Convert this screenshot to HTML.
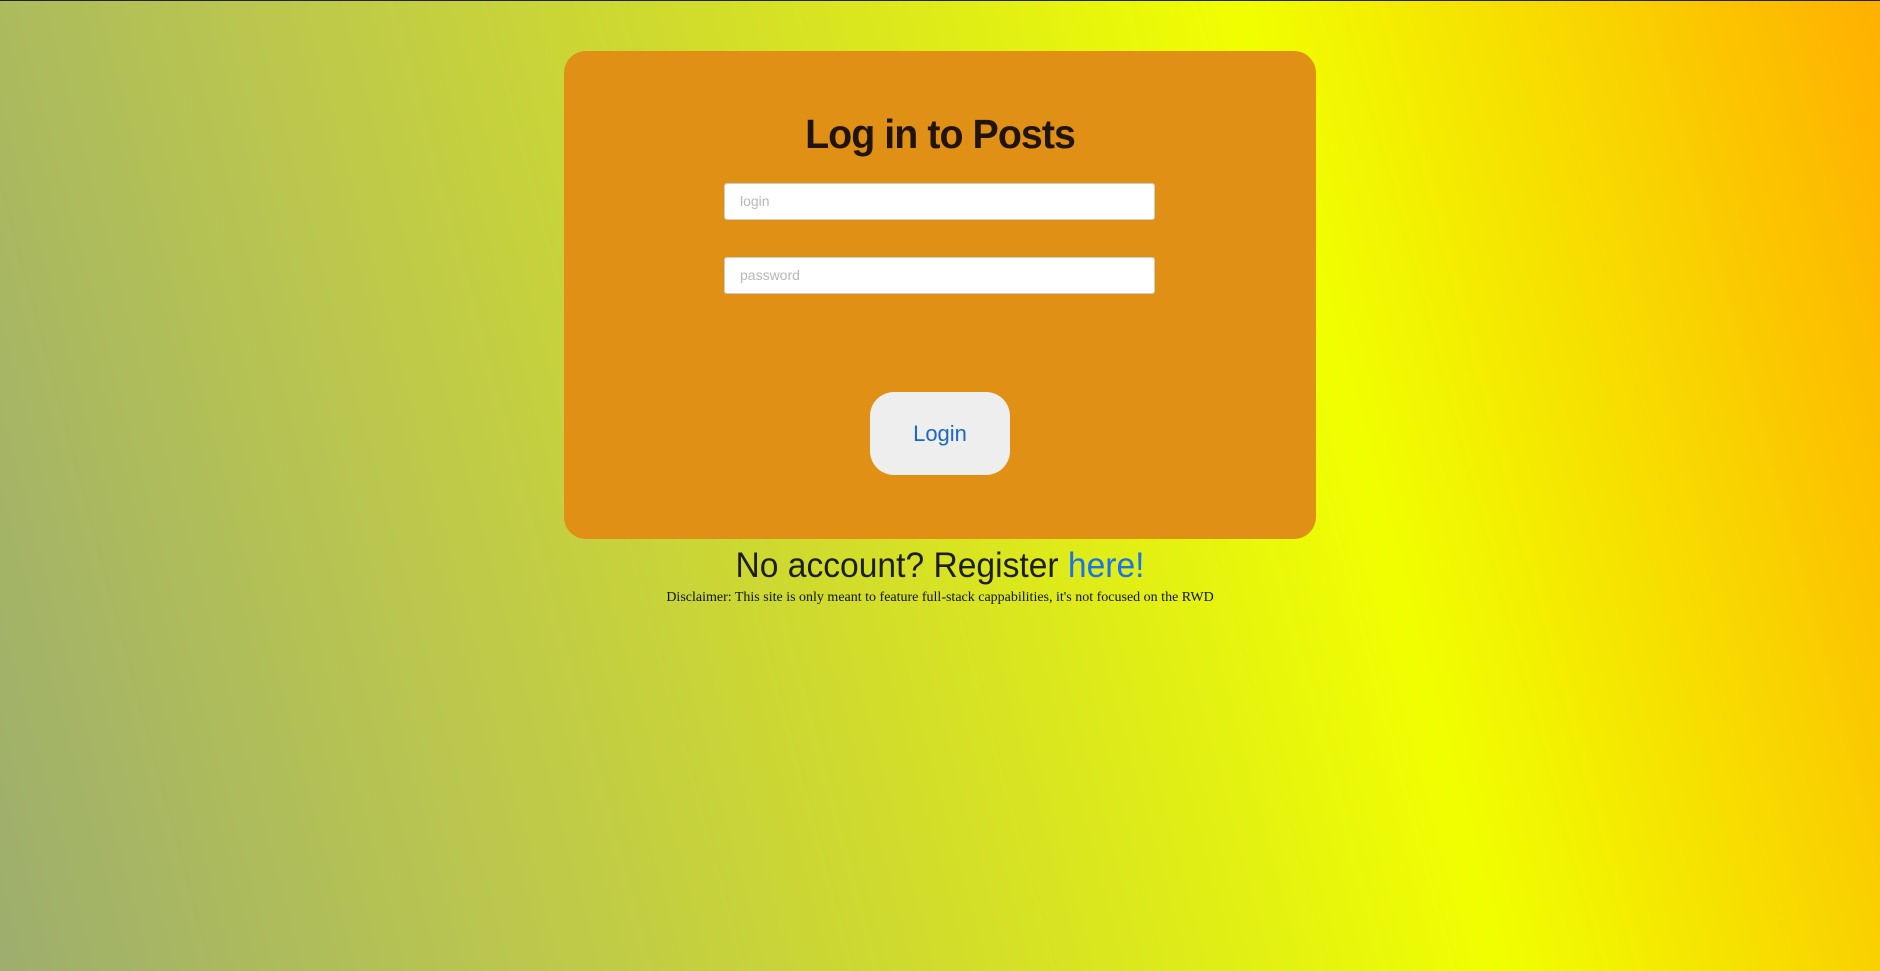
<!DOCTYPE html>
<html><head><meta charset="utf-8"><style>
html,body{margin:0;padding:0;width:1880px;height:971px;overflow:hidden}
body{background:linear-gradient(75deg,#9dae6e 0%,#bcc84c 25%,#d2dd2a 45%,#f0ff00 70%,#f8d800 85%,#ffb000 100%);border-top:1px solid #222;box-sizing:border-box;position:relative;font-family:"Liberation Sans",sans-serif}
.card{position:absolute;left:564px;top:50px;width:752px;height:488px;background:#e09015;border-radius:22px}
h1{position:absolute;left:0;right:0;top:110px;margin:0;text-align:center;font-size:41px;font-weight:bold;color:#221408;letter-spacing:-1px;transform:scaleX(0.96)}
.in{position:absolute;left:724px;width:431px;height:37px;background:#fff;border:1px solid #ccc;border-radius:3px;box-sizing:border-box;font-size:14px;color:#b8b8b8;padding-left:15px;line-height:35px}
.btn{position:absolute;left:870px;top:391px;width:140px;height:83px;background:#eee;border-radius:24px;text-align:center;line-height:83px;font-size:22px;color:#1a66cc}
.reg{position:absolute;left:0;right:0;top:545px;text-align:center;font-size:35px;color:#1e1e10;transform:scaleX(0.96)}
.reg span{color:#1a73e8}
.disc{position:absolute;left:0;right:0;top:589px;text-align:center;font-family:"Liberation Serif",serif;font-size:14px;color:#111}
</style></head><body>
<div class="card"></div>
<h1>Log in to Posts</h1>
<div class="in" style="top:182px">login</div>
<div class="in" style="top:256px">password</div>
<div class="btn">Login</div>
<div class="reg">No account? Register <span>here!</span></div>
<div class="disc">Disclaimer: This site is only meant to feature full-stack cappabilities, it's not focused on the RWD</div>
</body></html>
